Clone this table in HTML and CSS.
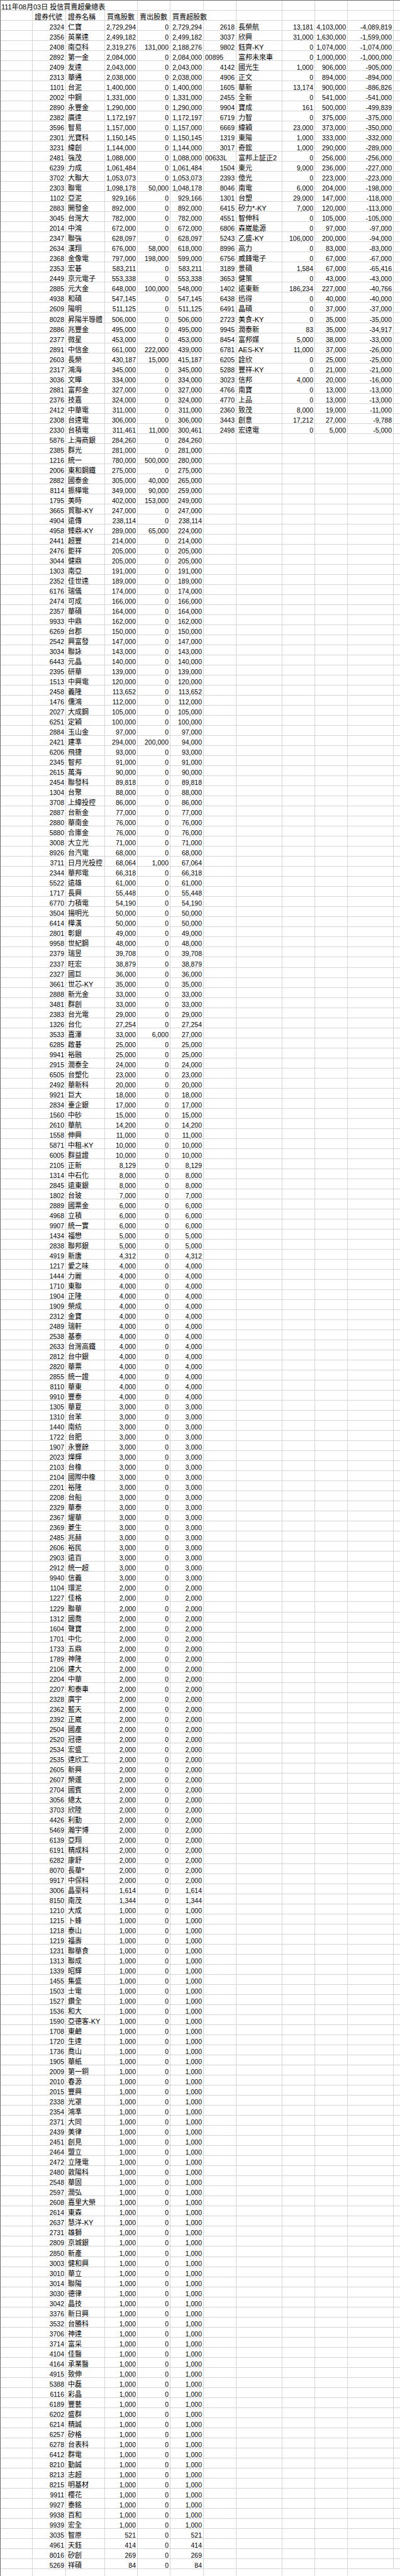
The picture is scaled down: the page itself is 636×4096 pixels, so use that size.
FILE: index.html
```html
<!DOCTYPE html>
<html lang="zh-Hant">
<head>
<meta charset="utf-8">
<title>投信買賣超彙總表</title>
<link rel="stylesheet" href="styles.css">
</head>
<body>
<div class="sheet">
<table class="grid">
<colgroup><col class="ca"><col class="cb"><col class="cc"><col class="cd"><col class="ce"><col class="cf"><col class="cg"><col class="ch"><col class="ci"><col class="cj"><col class="ck"><col class="cl"></colgroup>
<tbody>
<tr><td class="ttl" colspan="4">111年08月03日 投信買賣超彙總表<td><td><td><td><td><td><td><td>
<tr class="hdr"><td><td>證券代號<td>證券名稱<td>買進股數<td>賣出股數<td colspan="2">買賣超股數<td><td><td><td><td>
<tr><td><td>2324<td class="n">仁寶<td>2,729,294<td>0<td>2,729,294<td>2618<td class="n">長榮航<td>13,181<td>4,103,000<td>-4,089,819<td>
<tr><td><td>2356<td class="n">英業達<td>2,499,182<td>0<td>2,499,182<td>3037<td class="n">欣興<td>31,000<td>1,630,000<td>-1,599,000<td>
<tr><td><td>2408<td class="n">南亞科<td>2,319,276<td>131,000<td>2,188,276<td>9802<td class="n">鈺齊-KY<td>0<td>1,074,000<td>-1,074,000<td>
<tr><td><td>2892<td class="n">第一金<td>2,084,000<td>0<td>2,084,000<td class="t">00895<td class="n">富邦未來車<td>0<td>1,000,000<td>-1,000,000<td>
<tr><td><td>2409<td class="n">友達<td>2,043,000<td>0<td>2,043,000<td>4142<td class="n">國光生<td>1,000<td>906,000<td>-905,000<td>
<tr><td><td>2313<td class="n">華通<td>2,038,000<td>0<td>2,038,000<td>4906<td class="n">正文<td>0<td>894,000<td>-894,000<td>
<tr><td><td>1101<td class="n">台泥<td>1,400,000<td>0<td>1,400,000<td>1605<td class="n">華新<td>13,174<td>900,000<td>-886,826<td>
<tr><td><td>2002<td class="n">中鋼<td>1,331,000<td>0<td>1,331,000<td>2455<td class="n">全新<td>0<td>541,000<td>-541,000<td>
<tr><td><td>2890<td class="n">永豐金<td>1,290,000<td>0<td>1,290,000<td>9904<td class="n">寶成<td>161<td>500,000<td>-499,839<td>
<tr><td><td>2382<td class="n">廣達<td>1,172,197<td>0<td>1,172,197<td>6719<td class="n">力智<td>0<td>375,000<td>-375,000<td>
<tr><td><td>3596<td class="n">智易<td>1,157,000<td>0<td>1,157,000<td>6669<td class="n">緯穎<td>23,000<td>373,000<td>-350,000<td>
<tr><td><td>2301<td class="n">光寶科<td>1,150,145<td>0<td>1,150,145<td>1319<td class="n">東陽<td>1,000<td>333,000<td>-332,000<td>
<tr><td><td>3231<td class="n">緯創<td>1,144,000<td>0<td>1,144,000<td>3017<td class="n">奇鋐<td>1,000<td>290,000<td>-289,000<td>
<tr><td><td>2481<td class="n">強茂<td>1,088,000<td>0<td>1,088,000<td class="t">00633L<td class="n">富邦上証正2<td>0<td>256,000<td>-256,000<td>
<tr><td><td>6239<td class="n">力成<td>1,061,484<td>0<td>1,061,484<td>1504<td class="n">東元<td>9,000<td>236,000<td>-227,000<td>
<tr><td><td>3702<td class="n">大聯大<td>1,053,073<td>0<td>1,053,073<td>2393<td class="n">億光<td>0<td>223,000<td>-223,000<td>
<tr><td><td>2303<td class="n">聯電<td>1,098,178<td>50,000<td>1,048,178<td>8046<td class="n">南電<td>6,000<td>204,000<td>-198,000<td>
<tr><td><td>1102<td class="n">亞泥<td>929,166<td>0<td>929,166<td>1301<td class="n">台塑<td>29,000<td>147,000<td>-118,000<td>
<tr><td><td>2883<td class="n">開發金<td>892,000<td>0<td>892,000<td>6415<td class="n">矽力*-KY<td>7,000<td>120,000<td>-113,000<td>
<tr><td><td>3045<td class="n">台灣大<td>782,000<td>0<td>782,000<td>4551<td class="n">智伸科<td>0<td>105,000<td>-105,000<td>
<tr><td><td>2014<td class="n">中鴻<td>672,000<td>0<td>672,000<td>6806<td class="n">森崴能源<td>0<td>97,000<td>-97,000<td>
<tr><td><td>2347<td class="n">聯強<td>628,097<td>0<td>628,097<td>5243<td class="n">乙盛-KY<td>106,000<td>200,000<td>-94,000<td>
<tr><td><td>2634<td class="n">漢翔<td>676,000<td>58,000<td>618,000<td>8996<td class="n">高力<td>0<td>83,000<td>-83,000<td>
<tr><td><td>2368<td class="n">金像電<td>797,000<td>198,000<td>599,000<td>6756<td class="n">威鋒電子<td>0<td>67,000<td>-67,000<td>
<tr><td><td>2353<td class="n">宏碁<td>583,211<td>0<td>583,211<td>3189<td class="n">景碩<td>1,584<td>67,000<td>-65,416<td>
<tr><td><td>2449<td class="n">京元電子<td>553,338<td>0<td>553,338<td>3653<td class="n">健策<td>0<td>43,000<td>-43,000<td>
<tr><td><td>2885<td class="n">元大金<td>648,000<td>100,000<td>548,000<td>1402<td class="n">遠東新<td>186,234<td>227,000<td>-40,766<td>
<tr><td><td>4938<td class="n">和碩<td>547,145<td>0<td>547,145<td>6438<td class="n">迅得<td>0<td>40,000<td>-40,000<td>
<tr><td><td>2609<td class="n">陽明<td>511,125<td>0<td>511,125<td>6491<td class="n">晶碩<td>0<td>37,000<td>-37,000<td>
<tr><td><td>8028<td class="n">昇陽半導體<td>506,000<td>0<td>506,000<td>2723<td class="n">美食-KY<td>0<td>35,000<td>-35,000<td>
<tr><td><td>2886<td class="n">兆豐金<td>495,000<td>0<td>495,000<td>9945<td class="n">潤泰新<td>83<td>35,000<td>-34,917<td>
<tr><td><td>2377<td class="n">微星<td>453,000<td>0<td>453,000<td>8454<td class="n">富邦媒<td>5,000<td>38,000<td>-33,000<td>
<tr><td><td>2891<td class="n">中信金<td>661,000<td>222,000<td>439,000<td>6781<td class="n">AES-KY<td>11,000<td>37,000<td>-26,000<td>
<tr><td><td>2603<td class="n">長榮<td>430,187<td>15,000<td>415,187<td>6205<td class="n">詮欣<td>0<td>25,000<td>-25,000<td>
<tr><td><td>2317<td class="n">鴻海<td>345,000<td>0<td>345,000<td>5288<td class="n">豐祥-KY<td>0<td>21,000<td>-21,000<td>
<tr><td><td>3036<td class="n">文曄<td>334,000<td>0<td>334,000<td>3023<td class="n">信邦<td>4,000<td>20,000<td>-16,000<td>
<tr><td><td>2881<td class="n">富邦金<td>327,000<td>0<td>327,000<td>4766<td class="n">南寶<td>0<td>13,000<td>-13,000<td>
<tr><td><td>2376<td class="n">技嘉<td>324,000<td>0<td>324,000<td>4770<td class="n">上品<td>0<td>13,000<td>-13,000<td>
<tr><td><td>2412<td class="n">中華電<td>311,000<td>0<td>311,000<td>2360<td class="n">致茂<td>8,000<td>19,000<td>-11,000<td>
<tr><td><td>2308<td class="n">台達電<td>306,000<td>0<td>306,000<td>3443<td class="n">創意<td>17,212<td>27,000<td>-9,788<td>
<tr><td><td>2330<td class="n">台積電<td>311,461<td>11,000<td>300,461<td>2498<td class="n">宏達電<td>0<td>5,000<td>-5,000<td>
<tr><td><td>5876<td class="n">上海商銀<td>284,260<td>0<td>284,260<td><td><td><td><td><td>
<tr><td><td>2385<td class="n">群光<td>281,000<td>0<td>281,000<td><td><td><td><td><td>
<tr><td><td>1216<td class="n">統一<td>780,000<td>500,000<td>280,000<td><td><td><td><td><td>
<tr><td><td>2006<td class="n">東和鋼鐵<td>275,000<td>0<td>275,000<td><td><td><td><td><td>
<tr><td><td>2882<td class="n">國泰金<td>305,000<td>40,000<td>265,000<td><td><td><td><td><td>
<tr><td><td>8114<td class="n">振樺電<td>349,000<td>90,000<td>259,000<td><td><td><td><td><td>
<tr><td><td>1795<td class="n">美時<td>402,000<td>153,000<td>249,000<td><td><td><td><td><td>
<tr><td><td>3665<td class="n">貿聯-KY<td>247,000<td>0<td>247,000<td><td><td><td><td><td>
<tr><td><td>4904<td class="n">遠傳<td>238,114<td>0<td>238,114<td><td><td><td><td><td>
<tr><td><td>4958<td class="n">臻鼎-KY<td>289,000<td>65,000<td>224,000<td><td><td><td><td><td>
<tr><td><td>2441<td class="n">超豐<td>214,000<td>0<td>214,000<td><td><td><td><td><td>
<tr><td><td>2476<td class="n">鉅祥<td>205,000<td>0<td>205,000<td><td><td><td><td><td>
<tr><td><td>3044<td class="n">健鼎<td>205,000<td>0<td>205,000<td><td><td><td><td><td>
<tr><td><td>1303<td class="n">南亞<td>191,000<td>0<td>191,000<td><td><td><td><td><td>
<tr><td><td>2352<td class="n">佳世達<td>189,000<td>0<td>189,000<td><td><td><td><td><td>
<tr><td><td>6176<td class="n">瑞儀<td>174,000<td>0<td>174,000<td><td><td><td><td><td>
<tr><td><td>2474<td class="n">可成<td>166,000<td>0<td>166,000<td><td><td><td><td><td>
<tr><td><td>2357<td class="n">華碩<td>164,000<td>0<td>164,000<td><td><td><td><td><td>
<tr><td><td>9933<td class="n">中鼎<td>162,000<td>0<td>162,000<td><td><td><td><td><td>
<tr><td><td>6269<td class="n">台郡<td>150,000<td>0<td>150,000<td><td><td><td><td><td>
<tr><td><td>2542<td class="n">興富發<td>147,000<td>0<td>147,000<td><td><td><td><td><td>
<tr><td><td>3034<td class="n">聯詠<td>143,000<td>0<td>143,000<td><td><td><td><td><td>
<tr><td><td>6443<td class="n">元晶<td>140,000<td>0<td>140,000<td><td><td><td><td><td>
<tr><td><td>2395<td class="n">研華<td>139,000<td>0<td>139,000<td><td><td><td><td><td>
<tr><td><td>1513<td class="n">中興電<td>120,000<td>0<td>120,000<td><td><td><td><td><td>
<tr><td><td>2458<td class="n">義隆<td>113,652<td>0<td>113,652<td><td><td><td><td><td>
<tr><td><td>1476<td class="n">儒鴻<td>112,000<td>0<td>112,000<td><td><td><td><td><td>
<tr><td><td>2027<td class="n">大成鋼<td>105,000<td>0<td>105,000<td><td><td><td><td><td>
<tr><td><td>6251<td class="n">定穎<td>100,000<td>0<td>100,000<td><td><td><td><td><td>
<tr><td><td>2884<td class="n">玉山金<td>97,000<td>0<td>97,000<td><td><td><td><td><td>
<tr><td><td>2421<td class="n">建準<td>294,000<td>200,000<td>94,000<td><td><td><td><td><td>
<tr><td><td>6206<td class="n">飛捷<td>93,000<td>0<td>93,000<td><td><td><td><td><td>
<tr><td><td>2345<td class="n">智邦<td>91,000<td>0<td>91,000<td><td><td><td><td><td>
<tr><td><td>2615<td class="n">萬海<td>90,000<td>0<td>90,000<td><td><td><td><td><td>
<tr><td><td>2454<td class="n">聯發科<td>89,818<td>0<td>89,818<td><td><td><td><td><td>
<tr><td><td>1304<td class="n">台聚<td>88,000<td>0<td>88,000<td><td><td><td><td><td>
<tr><td><td>3708<td class="n">上緯投控<td>86,000<td>0<td>86,000<td><td><td><td><td><td>
<tr><td><td>2887<td class="n">台新金<td>77,000<td>0<td>77,000<td><td><td><td><td><td>
<tr><td><td>2880<td class="n">華南金<td>76,000<td>0<td>76,000<td><td><td><td><td><td>
<tr><td><td>5880<td class="n">合庫金<td>76,000<td>0<td>76,000<td><td><td><td><td><td>
<tr><td><td>3008<td class="n">大立光<td>71,000<td>0<td>71,000<td><td><td><td><td><td>
<tr><td><td>8926<td class="n">台汽電<td>68,000<td>0<td>68,000<td><td><td><td><td><td>
<tr><td><td>3711<td class="n">日月光投控<td>68,064<td>1,000<td>67,064<td><td><td><td><td><td>
<tr><td><td>2344<td class="n">華邦電<td>66,318<td>0<td>66,318<td><td><td><td><td><td>
<tr><td><td>5522<td class="n">遠雄<td>61,000<td>0<td>61,000<td><td><td><td><td><td>
<tr><td><td>1717<td class="n">長興<td>55,448<td>0<td>55,448<td><td><td><td><td><td>
<tr><td><td>6770<td class="n">力積電<td>54,190<td>0<td>54,190<td><td><td><td><td><td>
<tr><td><td>3504<td class="n">揚明光<td>50,000<td>0<td>50,000<td><td><td><td><td><td>
<tr><td><td>6414<td class="n">樺漢<td>50,000<td>0<td>50,000<td><td><td><td><td><td>
<tr><td><td>2801<td class="n">彰銀<td>49,000<td>0<td>49,000<td><td><td><td><td><td>
<tr><td><td>9958<td class="n">世紀鋼<td>48,000<td>0<td>48,000<td><td><td><td><td><td>
<tr><td><td>2379<td class="n">瑞昱<td>39,708<td>0<td>39,708<td><td><td><td><td><td>
<tr><td><td>2337<td class="n">旺宏<td>38,879<td>0<td>38,879<td><td><td><td><td><td>
<tr><td><td>2327<td class="n">國巨<td>36,000<td>0<td>36,000<td><td><td><td><td><td>
<tr><td><td>3661<td class="n">世芯-KY<td>35,000<td>0<td>35,000<td><td><td><td><td><td>
<tr><td><td>2888<td class="n">新光金<td>33,000<td>0<td>33,000<td><td><td><td><td><td>
<tr><td><td>3481<td class="n">群創<td>33,000<td>0<td>33,000<td><td><td><td><td><td>
<tr><td><td>2383<td class="n">台光電<td>29,000<td>0<td>29,000<td><td><td><td><td><td>
<tr><td><td>1326<td class="n">台化<td>27,254<td>0<td>27,254<td><td><td><td><td><td>
<tr><td><td>3533<td class="n">嘉澤<td>33,000<td>6,000<td>27,000<td><td><td><td><td><td>
<tr><td><td>6285<td class="n">啟碁<td>25,000<td>0<td>25,000<td><td><td><td><td><td>
<tr><td><td>9941<td class="n">裕融<td>25,000<td>0<td>25,000<td><td><td><td><td><td>
<tr><td><td>2915<td class="n">潤泰全<td>24,000<td>0<td>24,000<td><td><td><td><td><td>
<tr><td><td>6505<td class="n">台塑化<td>23,000<td>0<td>23,000<td><td><td><td><td><td>
<tr><td><td>2492<td class="n">華新科<td>20,000<td>0<td>20,000<td><td><td><td><td><td>
<tr><td><td>9921<td class="n">巨大<td>18,000<td>0<td>18,000<td><td><td><td><td><td>
<tr><td><td>2834<td class="n">臺企銀<td>17,000<td>0<td>17,000<td><td><td><td><td><td>
<tr><td><td>1560<td class="n">中砂<td>15,000<td>0<td>15,000<td><td><td><td><td><td>
<tr><td><td>2610<td class="n">華航<td>14,200<td>0<td>14,200<td><td><td><td><td><td>
<tr><td><td>1558<td class="n">伸興<td>11,000<td>0<td>11,000<td><td><td><td><td><td>
<tr><td><td>5871<td class="n">中租-KY<td>10,000<td>0<td>10,000<td><td><td><td><td><td>
<tr><td><td>6005<td class="n">群益證<td>10,000<td>0<td>10,000<td><td><td><td><td><td>
<tr><td><td>2105<td class="n">正新<td>8,129<td>0<td>8,129<td><td><td><td><td><td>
<tr><td><td>1314<td class="n">中石化<td>8,000<td>0<td>8,000<td><td><td><td><td><td>
<tr><td><td>2845<td class="n">遠東銀<td>8,000<td>0<td>8,000<td><td><td><td><td><td>
<tr><td><td>1802<td class="n">台玻<td>7,000<td>0<td>7,000<td><td><td><td><td><td>
<tr><td><td>2889<td class="n">國票金<td>6,000<td>0<td>6,000<td><td><td><td><td><td>
<tr><td><td>4968<td class="n">立積<td>6,000<td>0<td>6,000<td><td><td><td><td><td>
<tr><td><td>9907<td class="n">統一實<td>6,000<td>0<td>6,000<td><td><td><td><td><td>
<tr><td><td>1434<td class="n">福懋<td>5,000<td>0<td>5,000<td><td><td><td><td><td>
<tr><td><td>2838<td class="n">聯邦銀<td>5,000<td>0<td>5,000<td><td><td><td><td><td>
<tr><td><td>4919<td class="n">新唐<td>4,312<td>0<td>4,312<td><td><td><td><td><td>
<tr><td><td>1217<td class="n">愛之味<td>4,000<td>0<td>4,000<td><td><td><td><td><td>
<tr><td><td>1444<td class="n">力麗<td>4,000<td>0<td>4,000<td><td><td><td><td><td>
<tr><td><td>1710<td class="n">東聯<td>4,000<td>0<td>4,000<td><td><td><td><td><td>
<tr><td><td>1904<td class="n">正隆<td>4,000<td>0<td>4,000<td><td><td><td><td><td>
<tr><td><td>1909<td class="n">榮成<td>4,000<td>0<td>4,000<td><td><td><td><td><td>
<tr><td><td>2312<td class="n">金寶<td>4,000<td>0<td>4,000<td><td><td><td><td><td>
<tr><td><td>2489<td class="n">瑞軒<td>4,000<td>0<td>4,000<td><td><td><td><td><td>
<tr><td><td>2538<td class="n">基泰<td>4,000<td>0<td>4,000<td><td><td><td><td><td>
<tr><td><td>2633<td class="n">台灣高鐵<td>4,000<td>0<td>4,000<td><td><td><td><td><td>
<tr><td><td>2812<td class="n">台中銀<td>4,000<td>0<td>4,000<td><td><td><td><td><td>
<tr><td><td>2820<td class="n">華票<td>4,000<td>0<td>4,000<td><td><td><td><td><td>
<tr><td><td>2855<td class="n">統一證<td>4,000<td>0<td>4,000<td><td><td><td><td><td>
<tr><td><td>8110<td class="n">華東<td>4,000<td>0<td>4,000<td><td><td><td><td><td>
<tr><td><td>9910<td class="n">豐泰<td>4,000<td>0<td>4,000<td><td><td><td><td><td>
<tr><td><td>1305<td class="n">華夏<td>3,000<td>0<td>3,000<td><td><td><td><td><td>
<tr><td><td>1310<td class="n">台苯<td>3,000<td>0<td>3,000<td><td><td><td><td><td>
<tr><td><td>1440<td class="n">南紡<td>3,000<td>0<td>3,000<td><td><td><td><td><td>
<tr><td><td>1722<td class="n">台肥<td>3,000<td>0<td>3,000<td><td><td><td><td><td>
<tr><td><td>1907<td class="n">永豐餘<td>3,000<td>0<td>3,000<td><td><td><td><td><td>
<tr><td><td>2023<td class="n">燁輝<td>3,000<td>0<td>3,000<td><td><td><td><td><td>
<tr><td><td>2103<td class="n">台橡<td>3,000<td>0<td>3,000<td><td><td><td><td><td>
<tr><td><td>2104<td class="n">國際中橡<td>3,000<td>0<td>3,000<td><td><td><td><td><td>
<tr><td><td>2201<td class="n">裕隆<td>3,000<td>0<td>3,000<td><td><td><td><td><td>
<tr><td><td>2208<td class="n">台船<td>3,000<td>0<td>3,000<td><td><td><td><td><td>
<tr><td><td>2329<td class="n">華泰<td>3,000<td>0<td>3,000<td><td><td><td><td><td>
<tr><td><td>2367<td class="n">燿華<td>3,000<td>0<td>3,000<td><td><td><td><td><td>
<tr><td><td>2369<td class="n">菱生<td>3,000<td>0<td>3,000<td><td><td><td><td><td>
<tr><td><td>2485<td class="n">兆赫<td>3,000<td>0<td>3,000<td><td><td><td><td><td>
<tr><td><td>2606<td class="n">裕民<td>3,000<td>0<td>3,000<td><td><td><td><td><td>
<tr><td><td>2903<td class="n">遠百<td>3,000<td>0<td>3,000<td><td><td><td><td><td>
<tr><td><td>2912<td class="n">統一超<td>3,000<td>0<td>3,000<td><td><td><td><td><td>
<tr><td><td>9940<td class="n">信義<td>3,000<td>0<td>3,000<td><td><td><td><td><td>
<tr><td><td>1104<td class="n">環泥<td>2,000<td>0<td>2,000<td><td><td><td><td><td>
<tr><td><td>1227<td class="n">佳格<td>2,000<td>0<td>2,000<td><td><td><td><td><td>
<tr><td><td>1229<td class="n">聯華<td>2,000<td>0<td>2,000<td><td><td><td><td><td>
<tr><td><td>1312<td class="n">國喬<td>2,000<td>0<td>2,000<td><td><td><td><td><td>
<tr><td><td>1604<td class="n">聲寶<td>2,000<td>0<td>2,000<td><td><td><td><td><td>
<tr><td><td>1701<td class="n">中化<td>2,000<td>0<td>2,000<td><td><td><td><td><td>
<tr><td><td>1733<td class="n">五鼎<td>2,000<td>0<td>2,000<td><td><td><td><td><td>
<tr><td><td>1789<td class="n">神隆<td>2,000<td>0<td>2,000<td><td><td><td><td><td>
<tr><td><td>2106<td class="n">建大<td>2,000<td>0<td>2,000<td><td><td><td><td><td>
<tr><td><td>2204<td class="n">中華<td>2,000<td>0<td>2,000<td><td><td><td><td><td>
<tr><td><td>2207<td class="n">和泰車<td>2,000<td>0<td>2,000<td><td><td><td><td><td>
<tr><td><td>2328<td class="n">廣宇<td>2,000<td>0<td>2,000<td><td><td><td><td><td>
<tr><td><td>2362<td class="n">藍天<td>2,000<td>0<td>2,000<td><td><td><td><td><td>
<tr><td><td>2392<td class="n">正崴<td>2,000<td>0<td>2,000<td><td><td><td><td><td>
<tr><td><td>2504<td class="n">國產<td>2,000<td>0<td>2,000<td><td><td><td><td><td>
<tr><td><td>2520<td class="n">冠德<td>2,000<td>0<td>2,000<td><td><td><td><td><td>
<tr><td><td>2534<td class="n">宏盛<td>2,000<td>0<td>2,000<td><td><td><td><td><td>
<tr><td><td>2535<td class="n">達欣工<td>2,000<td>0<td>2,000<td><td><td><td><td><td>
<tr><td><td>2605<td class="n">新興<td>2,000<td>0<td>2,000<td><td><td><td><td><td>
<tr><td><td>2607<td class="n">榮運<td>2,000<td>0<td>2,000<td><td><td><td><td><td>
<tr><td><td>2704<td class="n">國賓<td>2,000<td>0<td>2,000<td><td><td><td><td><td>
<tr><td><td>3056<td class="n">總太<td>2,000<td>0<td>2,000<td><td><td><td><td><td>
<tr><td><td>3703<td class="n">欣陸<td>2,000<td>0<td>2,000<td><td><td><td><td><td>
<tr><td><td>4426<td class="n">利勤<td>2,000<td>0<td>2,000<td><td><td><td><td><td>
<tr><td><td>5469<td class="n">瀚宇博<td>2,000<td>0<td>2,000<td><td><td><td><td><td>
<tr><td><td>6139<td class="n">亞翔<td>2,000<td>0<td>2,000<td><td><td><td><td><td>
<tr><td><td>6191<td class="n">精成科<td>2,000<td>0<td>2,000<td><td><td><td><td><td>
<tr><td><td>6282<td class="n">康舒<td>2,000<td>0<td>2,000<td><td><td><td><td><td>
<tr><td><td>8070<td class="n">長華*<td>2,000<td>0<td>2,000<td><td><td><td><td><td>
<tr><td><td>9917<td class="n">中保科<td>2,000<td>0<td>2,000<td><td><td><td><td><td>
<tr><td><td>3006<td class="n">晶豪科<td>1,614<td>0<td>1,614<td><td><td><td><td><td>
<tr><td><td>8150<td class="n">南茂<td>1,344<td>0<td>1,344<td><td><td><td><td><td>
<tr><td><td>1210<td class="n">大成<td>1,000<td>0<td>1,000<td><td><td><td><td><td>
<tr><td><td>1215<td class="n">卜蜂<td>1,000<td>0<td>1,000<td><td><td><td><td><td>
<tr><td><td>1218<td class="n">泰山<td>1,000<td>0<td>1,000<td><td><td><td><td><td>
<tr><td><td>1219<td class="n">福壽<td>1,000<td>0<td>1,000<td><td><td><td><td><td>
<tr><td><td>1231<td class="n">聯華食<td>1,000<td>0<td>1,000<td><td><td><td><td><td>
<tr><td><td>1313<td class="n">聯成<td>1,000<td>0<td>1,000<td><td><td><td><td><td>
<tr><td><td>1339<td class="n">昭輝<td>1,000<td>0<td>1,000<td><td><td><td><td><td>
<tr><td><td>1455<td class="n">集盛<td>1,000<td>0<td>1,000<td><td><td><td><td><td>
<tr><td><td>1503<td class="n">士電<td>1,000<td>0<td>1,000<td><td><td><td><td><td>
<tr><td><td>1527<td class="n">鑽全<td>1,000<td>0<td>1,000<td><td><td><td><td><td>
<tr><td><td>1536<td class="n">和大<td>1,000<td>0<td>1,000<td><td><td><td><td><td>
<tr><td><td>1590<td class="n">亞德客-KY<td>1,000<td>0<td>1,000<td><td><td><td><td><td>
<tr><td><td>1708<td class="n">東鹼<td>1,000<td>0<td>1,000<td><td><td><td><td><td>
<tr><td><td>1720<td class="n">生達<td>1,000<td>0<td>1,000<td><td><td><td><td><td>
<tr><td><td>1736<td class="n">喬山<td>1,000<td>0<td>1,000<td><td><td><td><td><td>
<tr><td><td>1905<td class="n">華紙<td>1,000<td>0<td>1,000<td><td><td><td><td><td>
<tr><td><td>2009<td class="n">第一銅<td>1,000<td>0<td>1,000<td><td><td><td><td><td>
<tr><td><td>2010<td class="n">春源<td>1,000<td>0<td>1,000<td><td><td><td><td><td>
<tr><td><td>2015<td class="n">豐興<td>1,000<td>0<td>1,000<td><td><td><td><td><td>
<tr><td><td>2338<td class="n">光罩<td>1,000<td>0<td>1,000<td><td><td><td><td><td>
<tr><td><td>2354<td class="n">鴻準<td>1,000<td>0<td>1,000<td><td><td><td><td><td>
<tr><td><td>2371<td class="n">大同<td>1,000<td>0<td>1,000<td><td><td><td><td><td>
<tr><td><td>2439<td class="n">美律<td>1,000<td>0<td>1,000<td><td><td><td><td><td>
<tr><td><td>2451<td class="n">創見<td>1,000<td>0<td>1,000<td><td><td><td><td><td>
<tr><td><td>2464<td class="n">盟立<td>1,000<td>0<td>1,000<td><td><td><td><td><td>
<tr><td><td>2472<td class="n">立隆電<td>1,000<td>0<td>1,000<td><td><td><td><td><td>
<tr><td><td>2480<td class="n">敦陽科<td>1,000<td>0<td>1,000<td><td><td><td><td><td>
<tr><td><td>2548<td class="n">華固<td>1,000<td>0<td>1,000<td><td><td><td><td><td>
<tr><td><td>2597<td class="n">潤弘<td>1,000<td>0<td>1,000<td><td><td><td><td><td>
<tr><td><td>2608<td class="n">嘉里大榮<td>1,000<td>0<td>1,000<td><td><td><td><td><td>
<tr><td><td>2614<td class="n">東森<td>1,000<td>0<td>1,000<td><td><td><td><td><td>
<tr><td><td>2637<td class="n">慧洋-KY<td>1,000<td>0<td>1,000<td><td><td><td><td><td>
<tr><td><td>2731<td class="n">雄獅<td>1,000<td>0<td>1,000<td><td><td><td><td><td>
<tr><td><td>2809<td class="n">京城銀<td>1,000<td>0<td>1,000<td><td><td><td><td><td>
<tr><td><td>2850<td class="n">新產<td>1,000<td>0<td>1,000<td><td><td><td><td><td>
<tr><td><td>3003<td class="n">健和興<td>1,000<td>0<td>1,000<td><td><td><td><td><td>
<tr><td><td>3010<td class="n">華立<td>1,000<td>0<td>1,000<td><td><td><td><td><td>
<tr><td><td>3014<td class="n">聯陽<td>1,000<td>0<td>1,000<td><td><td><td><td><td>
<tr><td><td>3030<td class="n">德律<td>1,000<td>0<td>1,000<td><td><td><td><td><td>
<tr><td><td>3042<td class="n">晶技<td>1,000<td>0<td>1,000<td><td><td><td><td><td>
<tr><td><td>3376<td class="n">新日興<td>1,000<td>0<td>1,000<td><td><td><td><td><td>
<tr><td><td>3532<td class="n">台勝科<td>1,000<td>0<td>1,000<td><td><td><td><td><td>
<tr><td><td>3706<td class="n">神達<td>1,000<td>0<td>1,000<td><td><td><td><td><td>
<tr><td><td>3714<td class="n">富采<td>1,000<td>0<td>1,000<td><td><td><td><td><td>
<tr><td><td>4104<td class="n">佳醫<td>1,000<td>0<td>1,000<td><td><td><td><td><td>
<tr><td><td>4164<td class="n">承業醫<td>1,000<td>0<td>1,000<td><td><td><td><td><td>
<tr><td><td>4915<td class="n">致伸<td>1,000<td>0<td>1,000<td><td><td><td><td><td>
<tr><td><td>5388<td class="n">中磊<td>1,000<td>0<td>1,000<td><td><td><td><td><td>
<tr><td><td>6116<td class="n">彩晶<td>1,000<td>0<td>1,000<td><td><td><td><td><td>
<tr><td><td>6189<td class="n">豐藝<td>1,000<td>0<td>1,000<td><td><td><td><td><td>
<tr><td><td>6202<td class="n">盛群<td>1,000<td>0<td>1,000<td><td><td><td><td><td>
<tr><td><td>6214<td class="n">精誠<td>1,000<td>0<td>1,000<td><td><td><td><td><td>
<tr><td><td>6257<td class="n">矽格<td>1,000<td>0<td>1,000<td><td><td><td><td><td>
<tr><td><td>6278<td class="n">台表科<td>1,000<td>0<td>1,000<td><td><td><td><td><td>
<tr><td><td>6412<td class="n">群電<td>1,000<td>0<td>1,000<td><td><td><td><td><td>
<tr><td><td>8210<td class="n">勤誠<td>1,000<td>0<td>1,000<td><td><td><td><td><td>
<tr><td><td>8213<td class="n">志超<td>1,000<td>0<td>1,000<td><td><td><td><td><td>
<tr><td><td>8215<td class="n">明基材<td>1,000<td>0<td>1,000<td><td><td><td><td><td>
<tr><td><td>9911<td class="n">櫻花<td>1,000<td>0<td>1,000<td><td><td><td><td><td>
<tr><td><td>9927<td class="n">泰銘<td>1,000<td>0<td>1,000<td><td><td><td><td><td>
<tr><td><td>9938<td class="n">百和<td>1,000<td>0<td>1,000<td><td><td><td><td><td>
<tr><td><td>9939<td class="n">宏全<td>1,000<td>0<td>1,000<td><td><td><td><td><td>
<tr><td><td>3035<td class="n">智原<td>521<td>0<td>521<td><td><td><td><td><td>
<tr><td><td>4961<td class="n">天鈺<td>414<td>0<td>414<td><td><td><td><td><td>
<tr><td><td>8016<td class="n">矽創<td>269<td>0<td>269<td><td><td><td><td><td>
<tr><td><td>5269<td class="n">祥碩<td>84<td>0<td>84<td><td><td><td><td><td>
<tr><td><td><td><td><td><td><td><td><td><td><td>
</tbody>
</table>
</div>
</body>
</html>
```

FILE: styles.css
```css
html, body {
  margin: 0;
  padding: 0;
  background: #ffffff;
}

.sheet {
  width: 635px;
  border-left: 1px solid #6e6e6e;
  border-top: 1px solid #6e6e6e;
  overflow: hidden;
}

.grid {
  width: 635px;
  table-layout: fixed;
  border-collapse: separate;
  border-spacing: 0;
  font-family: "Liberation Sans", "Noto Sans CJK TC", sans-serif;
  font-size: 10.5px;
  color: #000000;
}

.ca { width: 51px; }
.cb { width: 53px; }
.cc { width: 62px; }
.cd { width: 52px; }
.ce { width: 52px; }
.cf { width: 53px; }
.cg { width: 52px; }
.ch { width: 73px; }
.ci { width: 52px; }
.cj { width: 52px; }
.ck { width: 73px; }
.cl { width: 10px; }

.grid td {
  box-sizing: border-box;
  height: 16.02px;
  padding: 0 2px 0 2px;
  border-right: 1px solid #d6d6d6;
  border-bottom: 1px solid #d6d6d6;
  text-align: right;
  vertical-align: bottom;
  line-height: 9px;
  white-space: nowrap;
}

.grid td:last-child {
  border-right: none;
}

.grid td.n {
  text-align: left;
  padding-left: 3px;
  font-size: 11px;
}

.grid td.t {
  text-align: left;
  padding-left: 2px;
}

.grid td.ttl {
  text-align: left;
  padding-left: 1px;
  font-size: 11px;
}

.hdr td {
  text-align: left;
  padding-left: 3px;
  font-size: 11px;
}
```
